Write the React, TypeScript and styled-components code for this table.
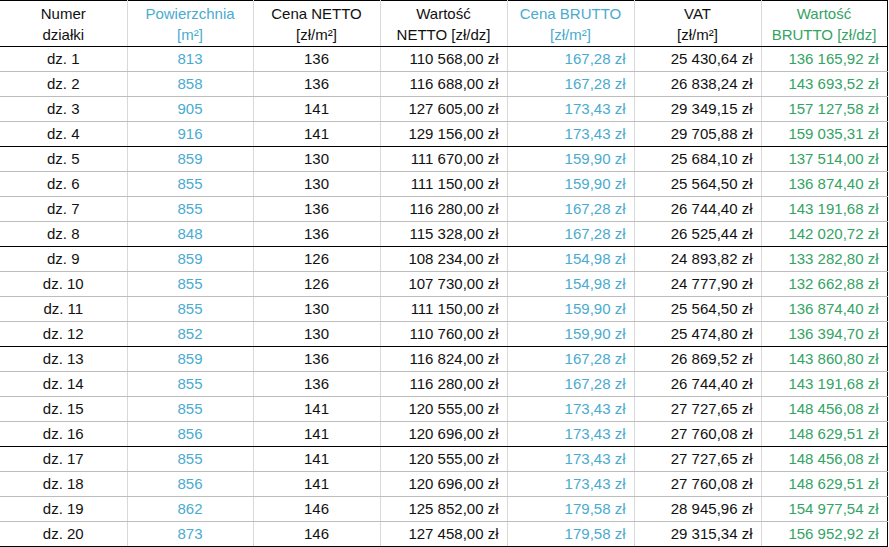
import React from 'react';
import styled, { createGlobalStyle } from 'styled-components';

const GlobalStyle = createGlobalStyle`
  html, body {
    margin: 0;
    padding: 0;
    background: #ffffff;
  }
  body {
    font-family: "Liberation Sans", Arial, sans-serif;
  }
`;

type Tone = 'plain' | 'blue' | 'green';

const colors: Record<Tone, string> = {
  plain: '#111111',
  blue: '#4aabcf',
  green: '#34a363',
};

const Sheet = styled.table`
  width: 887px;
  table-layout: fixed;
  border-collapse: collapse;
  border-top: 1px solid #000;
  border-right: 1px solid #000;
  border-bottom: 1px solid #000;
  font-size: 15px;
`;

const HeadCell = styled.th<{ $tone: Tone }>`
  height: 45px;
  padding: 0 2px;
  font-weight: 400;
  line-height: 21px;
  text-align: center;
  vertical-align: middle;
  color: ${({ $tone }) => colors[$tone]};
  border-left: 1px solid #d9d9d9;
  border-bottom: 1px solid #000;
  &:first-child {
    border-left: none;
  }
`;

const Row = styled.tr<{ $groupEnd: boolean }>`
  & > td {
    border-bottom: 1px solid ${({ $groupEnd }) => ($groupEnd ? '#000' : '#bdbdbd')};
  }
`;

const Cell = styled.td<{ $tone: Tone; $align: 'center' | 'right' }>`
  height: 24px;
  padding: 0 ${({ $align }) => ($align === 'right' ? '8px' : '2px')} 0 2px;
  line-height: 24px;
  white-space: nowrap;
  text-align: ${({ $align }) => $align};
  color: ${({ $tone }) => colors[$tone]};
  border-left: 1px solid #d9d9d9;
  &:first-child {
    border-left: none;
  }
`;

const columns: { head: [string, string]; tone: Tone; align: 'center' | 'right'; width: number }[] = [
  { head: ['Numer', 'działki'], tone: 'plain', align: 'center', width: 127 },
  { head: ['Powierzchnia', '[m²]'], tone: 'blue', align: 'center', width: 126 },
  { head: ['Cena NETTO', '[zł/m²]'], tone: 'plain', align: 'center', width: 127 },
  { head: ['Wartość', 'NETTO [zł/dz]'], tone: 'plain', align: 'right', width: 127 },
  { head: ['Cena BRUTTO', '[zł/m²]'], tone: 'blue', align: 'right', width: 127 },
  { head: ['VAT', '[zł/m²]'], tone: 'plain', align: 'right', width: 127 },
  { head: ['Wartość', 'BRUTTO [zł/dz]'], tone: 'green', align: 'right', width: 126 },
];

const rows: string[][] = [
  ['813', '136', '110 568,00', '167,28', '25 430,64', '136 165,92'],
  ['858', '136', '116 688,00', '167,28', '26 838,24', '143 693,52'],
  ['905', '141', '127 605,00', '173,43', '29 349,15', '157 127,58'],
  ['916', '141', '129 156,00', '173,43', '29 705,88', '159 035,31'],
  ['859', '130', '111 670,00', '159,90', '25 684,10', '137 514,00'],
  ['855', '130', '111 150,00', '159,90', '25 564,50', '136 874,40'],
  ['855', '136', '116 280,00', '167,28', '26 744,40', '143 191,68'],
  ['848', '136', '115 328,00', '167,28', '26 525,44', '142 020,72'],
  ['859', '126', '108 234,00', '154,98', '24 893,82', '133 282,80'],
  ['855', '126', '107 730,00', '154,98', '24 777,90', '132 662,88'],
  ['855', '130', '111 150,00', '159,90', '25 564,50', '136 874,40'],
  ['852', '130', '110 760,00', '159,90', '25 474,80', '136 394,70'],
  ['859', '136', '116 824,00', '167,28', '26 869,52', '143 860,80'],
  ['855', '136', '116 280,00', '167,28', '26 744,40', '143 191,68'],
  ['855', '141', '120 555,00', '173,43', '27 727,65', '148 456,08'],
  ['856', '141', '120 696,00', '173,43', '27 760,08', '148 629,51'],
  ['855', '141', '120 555,00', '173,43', '27 727,65', '148 456,08'],
  ['856', '141', '120 696,00', '173,43', '27 760,08', '148 629,51'],
  ['862', '146', '125 852,00', '179,58', '28 945,96', '154 977,54'],
  ['873', '146', '127 458,00', '179,58', '29 315,34', '156 952,92'],
];

export default function App() {
  return (
    <>
      <GlobalStyle />
      <Sheet>
        <colgroup>
          {columns.map((c, i) => (
            <col key={i} style={{ width: c.width }} />
          ))}
        </colgroup>
        <thead>
          <tr>
            {columns.map((c, i) => (
              <HeadCell key={i} $tone={c.tone}>
                {c.head[0]}
                <br />
                {c.head[1]}
              </HeadCell>
            ))}
          </tr>
        </thead>
        <tbody>
          {rows.map((r, i) => {
            const cells = [`dz. ${i + 1}`, r[0], r[1], ...r.slice(2).map((v) => `${v} zł`)];
            return (
              <Row key={i} $groupEnd={(i + 1) % 4 === 0}>
                {cells.map((v, j) => (
                  <Cell key={j} $tone={columns[j].tone} $align={columns[j].align}>
                    {v}
                  </Cell>
                ))}
              </Row>
            );
          })}
        </tbody>
      </Sheet>
    </>
  );
}
